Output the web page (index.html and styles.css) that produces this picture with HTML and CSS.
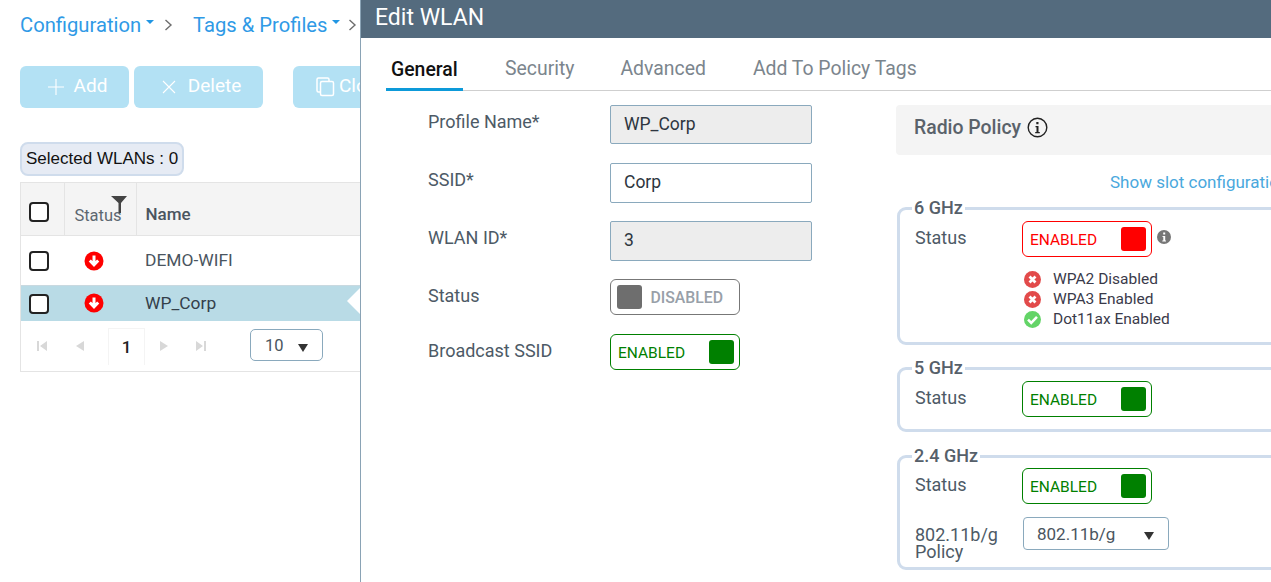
FILE: index.html
```html
<!DOCTYPE html>
<html lang="en">
<head>
<meta charset="utf-8">
<title>Edit WLAN</title>
<link rel="stylesheet" href="styles.css">
</head>
<body>
<div class="page">
  <main class="list">
    <nav class="crumbs">
      <span class="crumb">Configuration</span><i class="caret"></i>
      <svg class="sep" width="9" height="14" viewBox="0 0 9 14"><path d="M1.500 2l5.500 5-5.500 5" fill="none" stroke="#6d6d6d" stroke-width="1.400"/></svg>
      <span class="crumb crumb-2">Tags &amp; Profiles</span><i class="caret"></i>
      <svg class="sep" width="9" height="14" viewBox="0 0 9 14"><path d="M1.500 2l5.500 5-5.500 5" fill="none" stroke="#6d6d6d" stroke-width="1.400"/></svg>
    </nav>
    <div class="actions">
      <button class="btn btn-add"><svg width="18" height="18" viewBox="0 0 18 18"><path d="M9 1v16M1 9h16" stroke="#fff" stroke-width="1.100"/></svg>Add</button>
      <button class="btn btn-del"><svg width="14" height="14" viewBox="0 0 14 14"><path d="M1 1l12 12M13 1L1 13" stroke="#fff" stroke-width="1.100"/></svg>Delete</button>
      <button class="btn btn-clone"><svg width="19" height="20" viewBox="0 0 19 20"><path d="M4 15H2.500A1.500 1.500 0 0 1 1 13.500V2.500A1.500 1.500 0 0 1 2.500 1h9A1.500 1.500 0 0 1 13 2.500V4" fill="none" stroke="#fff" stroke-width="1.500"/><rect x="4.500" y="4.500" width="13" height="14" rx="1.500" fill="none" stroke="#fff" stroke-width="1.500"/></svg>Clone</button>
    </div>
    <div class="badge">Selected WLANs : 0</div>
    <section class="grid">
      <table class="wlans">
        <thead>
          <tr>
            <th class="c-check"><span class="check"></span></th>
            <th class="c-status"><span class="status-head">Status<svg class="funnel" width="16" height="17" viewBox="0 0 16 17"><path d="M0 0h16l-6 7v10H7.500V7z" fill="#444"/></svg></span></th>
            <th class="c-name">Name</th>
          </tr>
        </thead>
        <tbody>
          <tr class="row-1">
            <td><span class="check"></span></td>
            <td class="center"><svg class="down" width="20" height="20" viewBox="0 0 20 20"><circle cx="10" cy="10" r="9.500" fill="#f00"/><path d="M10 4.500v9M5.800 9.500L10 13.800l4.200-4.300" fill="none" stroke="#fff" stroke-width="3"/></svg></td>
            <td class="name">DEMO-WIFI</td>
          </tr>
          <tr class="row-2">
            <td><span class="check"></span></td>
            <td class="center"><svg class="down" width="20" height="20" viewBox="0 0 20 20"><circle cx="10" cy="10" r="9.500" fill="#f00"/><path d="M10 4.500v9M5.800 9.500L10 13.800l4.200-4.300" fill="none" stroke="#fff" stroke-width="3"/></svg></td>
            <td class="name">WP_Corp<i class="notch"></i></td>
          </tr>
        </tbody>
      </table>
      <div class="pager">
        <svg class="pg pg-first" width="10" height="10" viewBox="0 0 10 10"><path d="M0 0h2v10H0zM10 0v10L3 5z" fill="#d8d8d8"/></svg>
        <svg class="pg pg-prev" width="8" height="10" viewBox="0 0 8 10"><path d="M8 0v10L0 5z" fill="#d8d8d8"/></svg>
        <span class="pg-num">1</span>
        <svg class="pg pg-next" width="8" height="10" viewBox="0 0 8 10"><path d="M0 0v10l8-5z" fill="#d8d8d8"/></svg>
        <svg class="pg pg-last" width="10" height="10" viewBox="0 0 10 10"><path d="M8 0h2v10H8zM0 0v10l7-5z" fill="#d8d8d8"/></svg>
        <div class="pg-size"><span>10</span><i class="tri"></i></div>
      </div>
    </section>
  </main>

  <aside class="drawer">
    <header class="drawer-head">Edit WLAN</header>
    <div class="tabs">
      <span class="tab tab-on">General</span>
      <span class="tab tab-sec">Security</span>
      <span class="tab tab-adv">Advanced</span>
      <span class="tab tab-pol">Add To Policy Tags</span>
    </div>
    <div class="body">
      <form class="form">
        <div class="frow r1"><label>Profile Name*</label><div class="input ro">WP_Corp</div></div>
        <div class="frow r2"><label>SSID*</label><div class="input">Corp</div></div>
        <div class="frow r3"><label>WLAN ID*</label><div class="input ro">3</div></div>
        <div class="frow r4"><label>Status</label><div class="toggle off"><i class="knob"></i><span>DISABLED</span></div></div>
        <div class="frow r5"><label>Broadcast SSID</label><div class="toggle on"><span>ENABLED</span><i class="knob"></i></div></div>
      </form>
      <section class="radio">
        <h2 class="radio-head">Radio Policy<svg width="21" height="21" viewBox="0 0 21 21"><circle cx="10.500" cy="10.500" r="9.300" fill="none" stroke="#222" stroke-width="1.400"/><path d="M8.500 9h3v6h1.300v1.300H8.200V15h1.300v-4.700h-1zM9.300 5h2.200v2.200H9.300z" fill="#222"/></svg></h2>
        <a class="slot">Show slot configuration</a>
        <fieldset class="band b6">
          <legend>6 GHz</legend>
          <div class="brow"><span class="blabel">Status</span><div class="toggle red"><span>ENABLED</span><i class="knob"></i></div>
            <svg class="info" width="14" height="14" viewBox="0 0 14 14"><circle cx="7" cy="7" r="7" fill="#777"/><path d="M5.500 6h2.700v4.500H9v1H5.300v-1h1V7h-.8zM6.200 2.500h2v2h-2z" fill="#fff"/></svg>
          </div>
          <ul class="checks">
            <li><svg width="17" height="17" viewBox="0 0 16 16"><circle cx="8" cy="8" r="8" fill="#e24b4b"/><path d="M5.200 5.200l5.600 5.600M10.800 5.200l-5.600 5.600" stroke="#fff" stroke-width="2.600"/></svg>WPA2 Disabled</li>
            <li><svg width="17" height="17" viewBox="0 0 16 16"><circle cx="8" cy="8" r="8" fill="#e24b4b"/><path d="M5.200 5.200l5.600 5.600M10.800 5.200l-5.600 5.600" stroke="#fff" stroke-width="2.600"/></svg>WPA3 Enabled</li>
            <li><svg width="17" height="17" viewBox="0 0 16 16"><circle cx="8" cy="8" r="8" fill="#63d467"/><path d="M3.800 8.200l3 3 5.400-5.600" fill="none" stroke="#fff" stroke-width="2.400"/></svg>Dot11ax Enabled</li>
          </ul>
        </fieldset>
        <fieldset class="band b5">
          <legend>5 GHz</legend>
          <div class="brow"><span class="blabel">Status</span><div class="toggle on"><span>ENABLED</span><i class="knob"></i></div></div>
        </fieldset>
        <fieldset class="band b24">
          <legend>2.4 GHz</legend>
          <div class="brow"><span class="blabel">Status</span><div class="toggle on"><span>ENABLED</span><i class="knob"></i></div></div>
          <div class="brow brow-sel"><span class="blabel two">802.11b/g Policy</span><div class="select"><span>802.11b/g</span><i class="tri"></i></div></div>
        </fieldset>
      </section>
    </div>
  </aside>
</div>
</body>
</html>
```
FILE: styles.css
```css
* { box-sizing: border-box; }
html, body { margin: 0; padding: 0; height: 100%; overflow: hidden; background: #fff; }
body { font-family: Roboto, "Open Sans", sans-serif; color: #4a5560; }
.page { display: flex; width: 1271px; height: 582px; overflow: hidden; }

/* list side */
.list { width: 360px; flex: none; padding-left: 20px; overflow: hidden; }
.crumbs { display: flex; align-items: center; height: 50px; white-space: nowrap; }
.crumb { font-size: 20.200px; color: #2f9ae6; }
.caret { display: inline-block; margin: 0 0 7px 5px; border: 4.500px solid transparent; border-top-color: #2196e3; border-bottom: 0; }
.sep { margin: 0 20px 0 10px; flex: none; }
.crumbs .sep:last-child { margin: 0 0 0 8px; }
.actions { display: flex; margin-top: 16px; height: 42px; }
.btn { display: flex; align-items: center; justify-content: center; gap: 9px; height: 42px; padding: 0 0 4px; border: 0; border-radius: 6px; background: #b3e1f4; color: #fff; font: 400 19px Roboto, sans-serif; flex: none; }
.btn svg { margin-top: 4px; }
.btn-add { width: 109px; padding-left: 5px; }
.btn-del { width: 129px; margin-left: 5px; padding-left: 6px; gap: 12px; }
.btn-clone { width: 129px; margin-left: 30px; justify-content: flex-start; padding-left: 23px; gap: 4px; }
.badge { display: block; margin-top: 34px; height: 34px; line-height: 30px; width: 164px; padding-left: 4px; background: #e6ebf4; border: 2px solid #cfdcec; border-radius: 8px; color: #111; font-size: 17px; font-family: "Liberation Sans", Arial, sans-serif; white-space: nowrap; }
.grid { width: 400px; margin-top: 6px; border: 1px solid #e4e4e4; }
.wlans { border-collapse: collapse; table-layout: fixed; width: 100%; }
.wlans th { height: 52px; padding: 6px 0 0; background: #f4f4f4; border-bottom: 1px solid #e4e4e4; font-weight: 400; }
.wlans th + th { border-left: 1px solid #e4e4e4; }
.c-check { width: 43px; }
.c-status { width: 72px; }
.wlans .c-name { padding: 10px 0 0 9px; text-align: left; font-size: 17px; font-weight: 500; color: #4a5560; }
.status-head { position: relative; top: 4px; display: inline-block; margin-right: 4px; font-size: 16.500px; color: #5c6770; }
.funnel { position: absolute; right: -5px; top: -10px; }
.wlans td { padding: 0; }
.row-1 td { height: 50px; }
.row-2 td { height: 36px; background: #b9dbe6; border-top: 1px solid #c9d9e0; }
.wlans .center { padding-left: 20px; }
.wlans td:first-child, .wlans th:first-child { padding-left: 8px; text-align: left; }
.wlans .row-1 td:first-child, .wlans .row-1 .center { padding-top: 2px; }
.check { display: inline-block; width: 20px; height: 20px; border: 2px solid #222; border-radius: 4px; background: #fff; vertical-align: middle; }
.down { display: block; }
.wlans .name { position: relative; padding-left: 9px; font-size: 17.400px; color: #4a5560; }
.wlans .row-2 .name { color: #33404a; }
.notch { position: absolute; left: 211px; top: 2px; width: 0; height: 0; border: 13px solid transparent; border-right-color: #fff; border-left: 0; }
.pager { display: flex; align-items: center; height: 50px; padding-left: 16px; }
.pg { flex: none; }
.pg-prev { margin-left: 29px; }
.pg-num { display: flex; align-items: center; justify-content: center; width: 37px; height: 37px; margin-left: 24px; border: 1px solid #f4f4f4; border-bottom: 0; color: #222; font-size: 17px; font-weight: 500; }
.pg-next { margin-left: 15px; }
.pg-last { margin-left: 28px; }
.pg-size { display: flex; align-items: center; width: 73px; height: 32px; margin: 0 0 2px 44px; padding-left: 14px; border: 1px solid #8aa9bd; border-radius: 5px; font-size: 16.500px; color: #4a5560; }
.tri { display: inline-block; border: 5.500px solid transparent; border-top: 8px solid #333; border-bottom: 0; }
.pg-size .tri { margin: 5px 0 0 14px; }

/* drawer */
.drawer { flex: 1; min-width: 0; overflow: hidden; border-left: 1px solid #8aa3b5; background: #fff; }
.drawer-head { height: 38px; margin-left: -1px; padding-left: 15px; background: #546b7e; color: #fff; font-size: 23px; line-height: 36px; }
.tabs { display: flex; align-items: flex-end; height: 53px; margin-left: 25px; border-bottom: 1px solid #cfcfcf; }
.tab { flex: none; height: 38px; font-size: 19.400px; line-height: 34px; color: #7b858d; white-space: nowrap; }
.tab-on { width: 77px; margin-bottom: -1px; padding: 0 5px; border-bottom: 3px solid #0d9ad9; color: #111; font-weight: 500; }
.tab-sec { margin-left: 42px; }
.tab-adv { margin-left: 46px; }
.tab-pol { margin-left: 47px; }
.body { display: flex; align-items: flex-start; padding-top: 14px; }
.form { width: 535px; flex: none; }
.frow { display: flex; align-items: flex-start; }
.frow label { flex: none; width: 182px; margin: 5px 0 0 67px; font-size: 18px; line-height: 24px; color: #4d5a66; }
.r1, .r2, .r3 { height: 58px; }
.r4 { height: 55px; }
.input { width: 202px; height: 39px; padding-left: 13px; line-height: 37px; border: 1px solid #8aa9bd; border-radius: 2px; color: #2e3640; font-size: 17.500px; }
.r2 .input, .r3 .input { height: 40px; }
.ro { background: #ededed; }
.toggle { display: flex; flex: none; align-items: center; justify-content: space-between; width: 130px; height: 36px; padding: 0 5px 0 6px; border: 1px solid #777; border-radius: 6px; font-size: 15.500px; }
.knob { display: block; width: 25px; height: 24px; border-radius: 3px; }
.toggle span { white-space: nowrap; }
.off { padding-right: 16px; color: #98a0a8; font-weight: 500; font-size: 15.800px; }
.off .knob { background: #6e6e6e; }
.on { border-color: #008000; color: #008000; }
.on .knob { background: #008000; }
.red { border-color: #f00; color: #f00; }
.red .knob { background: #f00; }
.on span, .red span { margin-top: 1px; padding-left: 1px; }

/* radio */
.radio { flex: none; width: 600px; }
.radio-head { display: flex; align-items: center; gap: 6px; height: 50px; margin: 0; padding: 0 0 5px 18px; background: #f4f4f4; border-radius: 4px; font-size: 19.400px; font-weight: 500; color: #5a626a; }
.slot { display: block; margin: 16px 0 0 214px; font-size: 17px; line-height: 22px; color: #4aa8dd; white-space: nowrap; }
.band { min-width: 0; margin: 0 0 0 1px; padding: 0 0 0 15px; border: 3px solid #cfdcec; border-radius: 9px; }
.b6 { height: 147px; margin-top: 5px; }
.b5 { height: 74px; margin-top: 13px; }
.b24 { height: 124px; margin-top: 14px; }
.band legend { margin-left: -3px; padding: 0 2px; font-size: 18px; font-weight: 500; line-height: 20px; color: #56606a; }
.b6 .brow, .b5 .brow { margin-top: 3px; }
.b24 .brow { margin-top: 2px; }
.brow { display: flex; align-items: flex-start; }
.blabel { flex: none; width: 107px; margin-top: 5px; font-size: 18px; line-height: 24px; color: #4d5a66; }
.blabel.two { width: 108px; margin-top: 9px; line-height: 17px; }
.info { margin: 9px 0 0 5px; }
.checks { margin: 12px 0 0 107px; padding: 0; list-style: none; font-size: 15.500px; line-height: 20px; color: #3a3a4a; }
.checks li { display: flex; align-items: center; gap: 12px; margin-left: 2px; }
.b24 .brow-sel { margin-top: 13px; }
.select { display: flex; align-items: center; width: 146px; height: 33px; padding-left: 13px; border: 1px solid #8aa9bd; border-radius: 4px; font-size: 17px; color: #4a5560; }
.select .tri { margin: 5px 0 0 29px; }
```
